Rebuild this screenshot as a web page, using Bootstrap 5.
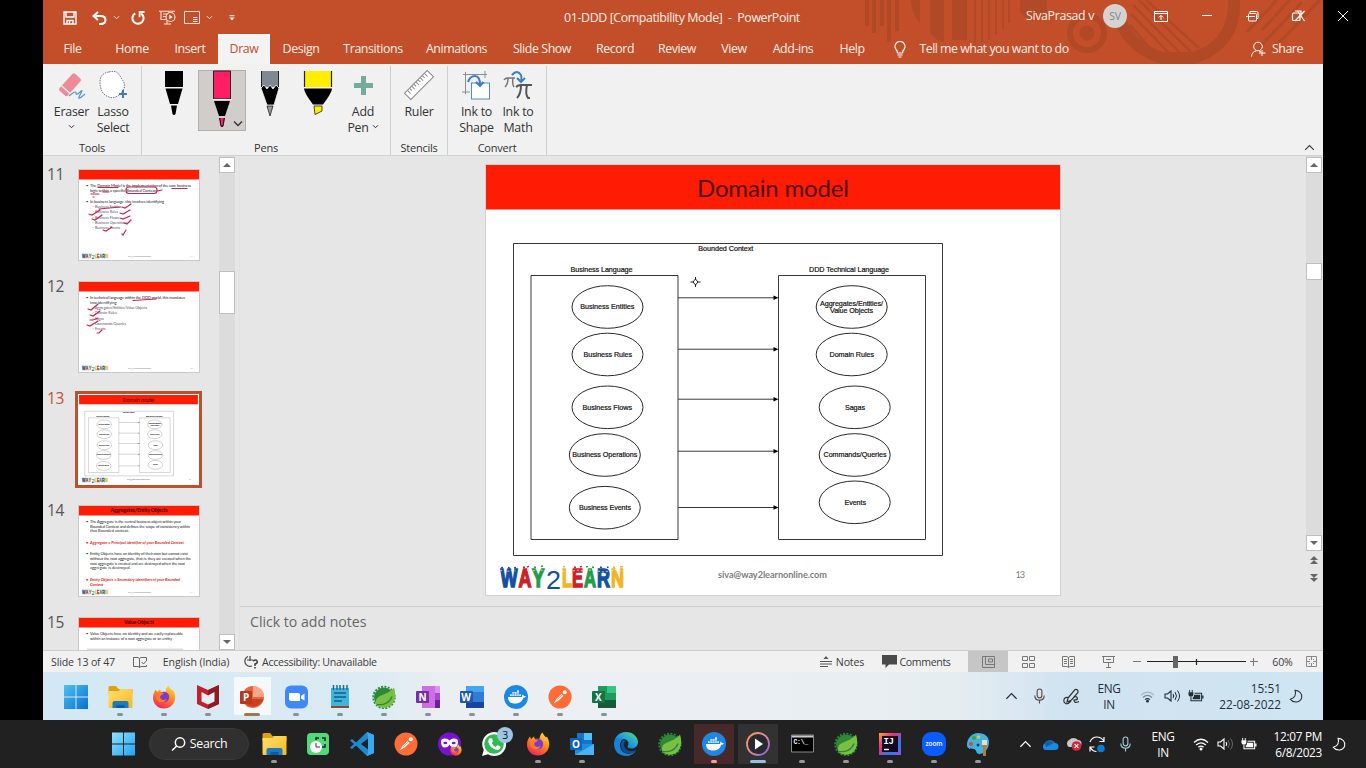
<!DOCTYPE html>
<html lang="en">
<head>
<meta charset="utf-8">
<meta name="viewport" content="width=device-width, initial-scale=1">
<title>01-DDD [Compatibility Mode] - PowerPoint</title>
<link href="https://cdn.jsdelivr.net/npm/bootstrap@5.3.0/dist/css/bootstrap.min.css" rel="stylesheet">
<script src="https://cdn.jsdelivr.net/npm/bootstrap@5.3.0/dist/js/bootstrap.bundle.min.js"></script>
<style>
body{width:1366px;height:768px;overflow:hidden;background:#000;font-family:"Open Sans","Noto Sans",sans-serif;font-size:12.4px;line-height:16px;color:#333}
svg{display:block;flex:none;overflow:visible}
.slots{display:grid;align-items:center;justify-items:center}
.desk{height:720px;padding-left:43px}
.remote{width:1280px;background:#e6e6e6}
.outer-close{width:40px;height:32px}
/* header */
.head{height:64px;background:#c24f29;color:#fdeee8}
.deco{left:0;top:0;overflow:hidden}
.titlebar{height:35px}
.qat{grid-template-columns:42px 16px 19px 23px 36px 13px 22px 24px;padding-left:6px;width:220px}
.doc-title{width:838px;letter-spacing:-.4px}
.winzone{height:32px}
.user{width:77px;letter-spacing:-.35px}
.avatar{width:24px;height:24px;background:#d5d3d2;color:#8a8582;font-size:10.5px;letter-spacing:-.2px;margin-right:11px}
.winbtns{grid-template-columns:46px 46px 45px 46px;margin-right:2px}
.tabs{height:30px;margin-top:-1px;grid-template-columns:59px 60px 56px 52px 62px 82px 85px 86px 60px 64px 50px 68px 50px 42px 150px 1fr;letter-spacing:-.42px}
.tabs .on{background:#f3f3f3;color:#c0512f;align-self:stretch;justify-self:stretch}
.bulb{margin-left:4px}
.tellme{letter-spacing:-.51px}
.share{padding-right:20px;letter-spacing:-.45px}
.share svg{margin-right:6px}
/* ribbon */
.ribbon{height:92px;background:#f1f1f1;border-bottom:1px solid #d2d2d2;letter-spacing:-.25px}
.grp{height:89px;margin-top:2px;border-right:1px solid #cfcfcf;padding-top:4px}
.grp .slots{align-items:start;height:71px}
.grp-name{font-size:11px;letter-spacing:-.25px;line-height:14px}
.tool{display:flex;flex-direction:column;align-items:center;text-align:center;white-space:nowrap}
.tool svg.big{margin-bottom:4px}
.pen-ico{margin-top:1px}
.g-tools{width:99px}.g-tools .slots{grid-template-columns:41px 42px;padding-left:8px}
.g-pens{width:249px}.g-pens .slots{grid-template-columns:49px 48px 48px 48px 42px;padding-left:7px}
.g-sten{width:57px}.g-conv{width:99px}.g-conv .slots{grid-template-columns:41px 42px;padding-left:8px}
.pen-on{width:48px;height:61px;background:#d0cdcb;border:1px solid #b1aeac}
/* work area */
.work{height:494px}
.thumbs{width:176px;height:494px;overflow:hidden;padding-top:13px}
.thumb-row{height:112px}
.num{width:35px;padding-left:4px;font-size:15.500px;letter-spacing:-.4px;line-height:10px;color:#555}
.num.sel{color:#c0512f}
.mini{width:122px;height:92px;border:1px solid #c9c9c9;background:#fff}
.mini.sel{width:127px;height:97px;border:3px solid #b9532f;padding:1px;margin:-2px 0 0 -3px}
.sbar{width:16px;background:#dcdcdc;padding-top:1px}
.sbtn,.sthumb{background:#fff;border:1px solid #bfbfbf;width:16px}
.sbtn{height:16px}
.tri{fill:#666}
.gap-l{height:98px}.th-l{height:43px}.gap-r{height:90px}.th-r{height:17px}
.canvas{height:450px;padding:9px 0 0 246px}
.center-row{border-bottom:1px solid #cfcfcf;margin-right:1px}
.slide-box{width:574px;height:430px;outline:1px solid #d2d2d2;background:#fff}
.notes{height:43px;padding:7px 0 0 10px;font-size:14.100px;letter-spacing:0;color:#666}
.rightbar{height:395px}
/* status */
.status{height:22px;background:#f1f1f1;border-top:1px solid #cdcdcd;font-size:10.600px;letter-spacing:-.15px;color:#3c3c3c}
.st-l{grid-template-columns:78px 35px 78px 5px 22px 117px;padding-left:1px}
.st-l .acc{letter-spacing:-.29px;justify-self:start}
.st-r{grid-template-columns:20px 28px 17px 16px 56px 15px 40px 40px 40px 40px 18px 100px 16px 37px 24px}
.st-r .cm{letter-spacing:-.35px}
.st-r .act{background:#c6c6c6;align-self:stretch;justify-self:stretch}
/* taskbars */
.tb1{height:48px;background:linear-gradient(90deg,#d3e8f4 0,#dcebf4 26%,#eceff2 32%,#eceff3 48%,#e6edf1 71%,#d0e3f1 80%,#cfe5f1 100%);color:#222f38;font-size:11.800px;letter-spacing:-.3px}
.apps{display:grid;grid-auto-flow:column;grid-auto-columns:44px}
.app{height:48px;padding-top:13px;display:flex;flex-direction:column;align-items:center;position:relative}
.app::after{content:"";width:6px;height:3px;border-radius:2px;background:#84919b;margin-top:4px}
.app.idle::after{background:none}
.app.act::after{width:16px;background:#a1764a}
.app.act{background:linear-gradient(#f4f9fc,#f4f9fc) center/37px 38px no-repeat}
.tb1 .apps{padding-left:11px}
.tr1{grid-template-columns:16px 40px 24px 52px 24px 25px 24px 73px 30px;margin-left:auto;margin-right:12px}
.tr1 .clock{letter-spacing:.02px}
.tb2{height:48px;background:#212121;color:#fff;font-size:11.800px;letter-spacing:-.3px}
.winkey{margin:0 10px 0 112px}
.tb2 .app::after{background:#999}
.tb2 .app{padding-top:12px}
.tb2 .app.idle::after{background:none}
.tb2 .app.alert-on{background:linear-gradient(#482929,#482929) center/40px 40px no-repeat}
.tb2 .app.alert-on::after{background:#ff9b9b}
.tb2 .app.now{background:linear-gradient(#323232,#323232) center/40px 40px no-repeat}
.tb2 .app.now::after{background:#91c1e4;width:16px}
.pill{width:100px;height:32px;background:#303030;border:1px solid #383838;border-radius:16px;font-size:12.400px;margin:0 3px 0 4px}
.cnt{left:25px;top:7px;width:16px;height:16px;background:#9cc6e6;color:#111;font-size:10.500px;position:absolute;border-radius:50%;text-align:center;line-height:16px}
.tr2{grid-template-columns:16px 32px 16px 32px 24px 52px 24px 24px 24px 61px 34px;margin-left:auto;margin-right:10px}
.clock{justify-self:end;text-align:right;line-height:16px}
.lang{text-align:center;line-height:16px}
</style>
</head>
<body>
<svg width="0" height="0" class="position-absolute" aria-hidden="true">
 <defs>
  <linearGradient id="gw" x1="0" y1="0" x2="1" y2="1"><stop offset="0" stop-color="#4cc2f1"/><stop offset="1" stop-color="#0a6fd0"/></linearGradient>
  <linearGradient id="gw2" x1="0" y1="0" x2="1" y2="1"><stop offset="0" stop-color="#8be2ff"/><stop offset="1" stop-color="#22a2f2"/></linearGradient>
  <linearGradient id="gf" x1="0" y1="0" x2="1" y2="1"><stop offset="0" stop-color="#ffe072"/><stop offset="1" stop-color="#f5b91c"/></linearGradient>
  <linearGradient id="gff" x1=".8" y1="0" x2=".3" y2="1"><stop offset="0" stop-color="#ffe03c"/><stop offset=".45" stop-color="#ff8a1e"/><stop offset="1" stop-color="#f0245a"/></linearGradient>
  <linearGradient id="ge" x1="0" y1="1" x2="1" y2="0"><stop offset="0" stop-color="#0c59a4"/><stop offset=".5" stop-color="#1b9de2"/><stop offset="1" stop-color="#5fe06a"/></linearGradient>
  <linearGradient id="gm" x1="0" y1="0" x2="1" y2="1"><stop offset="0" stop-color="#ff9a4a"/><stop offset=".5" stop-color="#e08a9a"/><stop offset="1" stop-color="#8060e0"/></linearGradient>
  <linearGradient id="gi" x1="0" y1="0" x2="1" y2="1"><stop offset="0" stop-color="#ffa13a"/><stop offset=".35" stop-color="#e8307a"/><stop offset=".7" stop-color="#2a7af0"/><stop offset="1" stop-color="#9a4af0"/></linearGradient>
  <symbol id="folder" viewBox="0 0 24 24"><path d="M0 2.500Q0 1 1.500 1h6l2.500 3H24v5H0z" fill="#e0a010"/><path d="M0 6h10l2-2h11q1 0 1 1v17q0 1-1 1H1q-1 0-1-1z" fill="url(#gf)"/><path d="M4 23v-5q0-2 2-2h12q2 0 2 2v5z" fill="#1a79c4"/><path d="M8 20h8v3H8z" fill="#0e5a9a"/></symbol>
  <symbol id="firefox" viewBox="0 0 24 24"><path d="M12 23.500C5.500 23.500 1 18.700 1 12.500 1 9 2.300 6.500 4 4.500l1 2.500 3-2.500 1 2.500c2-.5 3.500-.5 4.500 0 .2-2.500 1-5 3-6.500.5 2 2 3 3.500 5l1-.8c1.500 2.500 2.200 5 2.200 7.500 0 6.500-5 11.300-11.200 11.300z" fill="url(#gff)"/><circle cx="12" cy="12" r="5.200" fill="#7c3bd0"/><path d="M4.500 8c3 1 5-1 7.500 0-1 2-3.500 2-4 4 .5 3 4 3.800 6.500 2-1 4.500-9 4.500-10.500-1z" fill="#ff7a2a"/></symbol>
  <symbol id="spring" viewBox="0 0 24 24"><circle cx="12" cy="12.500" r="10" fill="#2c8a34"/><circle cx="12" cy="12.500" r="10.800" fill="none" stroke="#2c8a34" stroke-width="1.800" stroke-dasharray="2 1.400"/><path d="M22 2.500c2.500 8 1 15-4 18.500-4.500 2.500-9.500 2-13-.5 0-1-1.500-2-1-4.500C5 9 16 10.500 22 2.500z" fill="#78c043"/><path d="M5 19.500c7 1 13-2 15-8" fill="none" stroke="#2c8a34" stroke-width="1.300"/></symbol>
  <symbol id="postman" viewBox="0 0 24 24"><circle cx="12" cy="12" r="11.500" fill="#ff6c37"/><path d="M5.500 18.500l3-4.500 5-5 2 2-5 4.500z" fill="#fff"/><circle cx="16.800" cy="7.200" r="2" fill="#fff"/><path d="M9 15l5-5" stroke="#ff9a75" stroke-width=".8"/></symbol>
  <symbol id="docker" viewBox="0 0 24 24"><circle cx="12" cy="12" r="12" fill="#1d87e6"/><path d="M4 12h14c.3-1 0-2 .8-2.600.6.4 1 1 1 1.600.8-.2 1.500 0 2 .3-.5 1-1.400 1.500-2.600 1.500C18 17 15 18.500 11 18.500c-4.500 0-7-2-7-6.500z" fill="#fff"/><path d="M6 11V9h2V7h5V5.200h2V9h2v2z" fill="#fff" opacity=".85"/><path d="M8 7v4M10.300 7v4M12.800 7v4M15 7v4M6 9h11" stroke="#1d87e6" stroke-width=".5"/></symbol>
  <symbol id="win" viewBox="0 0 24 24"><path d="M0 0h11.500v11.500H0zM12.500 0H24v11.500H12.500zM0 12.500h11.500V24H0zM12.500 12.500H24V24H12.500z"/></symbol>
  <symbol id="wifi" viewBox="0 0 16 16"><g fill="none" stroke="currentColor" stroke-width="1.300"><path d="M1 6.500q7-6.500 14 0"/><path d="M3.200 9q4.800-4.300 9.600 0"/><path d="M5.400 11.300q2.600-2.200 5.200 0"/></g><circle cx="8" cy="13" r="1.500" fill="currentColor"/></symbol>
  <symbol id="wifilow" viewBox="0 0 16 16"><g fill="none" stroke="currentColor" stroke-width="1.300"><path d="M1 6.500q7-6.500 14 0" opacity=".25"/><path d="M3.200 9q4.800-4.300 9.600 0" opacity=".5"/><path d="M5.400 11.300q2.600-2.200 5.200 0"/></g><circle cx="8" cy="13" r="1.500" fill="currentColor"/></symbol>
  <symbol id="vol" viewBox="0 0 16 16"><path d="M1 6h2.500L7 3v10L3.500 10H1z" fill="none" stroke="currentColor" stroke-width="1.100"/><path d="M9 6q1.500 2 0 4" fill="none" stroke="currentColor" stroke-width="1.100"/></symbol>
  <symbol id="bat" viewBox="0 0 16 16"><path d="M1.200 1v3M4 1v3" stroke="currentColor"/><path d="M0 3.500h5.200V6q0 2-2.600 2T0 6z" fill="currentColor"/><path d="M2.600 8v4.500H14v-8H6.500" fill="none" stroke="currentColor" stroke-width="1.100"/><path d="M6 6h6.500v5H4.500V9Q6 8.500 6 6z" fill="currentColor"/><path d="M14.500 7H16v3h-1.500z" fill="currentColor"/></symbol>
  <symbol id="moon" viewBox="0 0 16 16"><path d="M6.500 1.500C8 6 6 9.500 1.500 11 5 15.500 12 14.500 13.500 9.500 14.500 5.500 11.500 1.500 6.500 1.500z" fill="none" stroke="currentColor" stroke-width="1.200"/></symbol>
  <symbol id="micr" viewBox="0 0 16 16"><rect x="5.500" y=".5" width="5" height="9.500" rx="2.500" fill="none" stroke="currentColor" stroke-width="1.200"/><path d="M3 7.500q0 5 5 5t5-5M8 12.500V16" fill="none" stroke="currentColor" stroke-width="1.200"/></symbol>
  <symbol id="up" viewBox="0 0 14 8"><path d="M1.500 7L7 1.500 12.500 7" fill="none" stroke="currentColor" stroke-width="1.300"/></symbol>
  <symbol id="dn" viewBox="0 0 8 6"><path d="M1 1.500l3 3 3-3" fill="none" stroke="currentColor" stroke-width="1.200"/></symbol>
  <g id="w2l" font-family="Liberation Sans" font-weight="700" font-size="25" stroke-width="1.500">
   <text x="500.500" y="587" fill="#1450a0" stroke="#1450a0" textLength="17" lengthAdjust="spacingAndGlyphs">W</text><text x="518.500" y="587" fill="#cf2027" stroke="#cf2027" textLength="13" lengthAdjust="spacingAndGlyphs">A</text><text x="532" y="586.500" fill="#1f9d49" stroke="#1f9d49" textLength="12.500" lengthAdjust="spacingAndGlyphs">Y</text><text x="546" y="589" fill="#1450a0" stroke="none" font-weight="400" font-size="26" textLength="15" lengthAdjust="spacingAndGlyphs">2</text><text x="562" y="587" fill="#f5b324" stroke="#f5b324" textLength="10" lengthAdjust="spacingAndGlyphs">L</text><text x="572" y="587" fill="#cf2027" stroke="#cf2027" textLength="11" lengthAdjust="spacingAndGlyphs">E</text><text x="584" y="587" fill="#1f9d49" stroke="#1f9d49" textLength="12" lengthAdjust="spacingAndGlyphs">A</text><text x="597" y="587" fill="#1450a0" stroke="#1450a0" textLength="13" lengthAdjust="spacingAndGlyphs">R</text><text x="611" y="587" fill="#f5b324" stroke="#f5b324" textLength="13" lengthAdjust="spacingAndGlyphs">N</text>
   <path d="M500 571l4-1 3 1.500 5-1 4 .5M519 572l3-1M527 570l5 2M533 571l4-1.500 7 1M562 571l9 1M573 571l4-1 6 1M585 571l9-1.500M598 571l5 1 6-1M611 571l4-1.500 8 1.500" stroke="#fff" stroke-width=".7" fill="none" stroke-dasharray="2 2"/>
   <path d="M501 568l2-.6M508 567.500l2 .6M514 568l2-.6M600 567l2 .6M607 567.500l1.500-.5" stroke="#1450a0"/><path d="M523 567l2 .5M527 567l2-.6M574 567l2 .5M580 567l2-.6" stroke="#cf2027"/><path d="M534 567l2 .5M541 566.500l2-.6M586 567l2-.6M592 567l2 .5" stroke="#1f9d49"/><path d="M563 567l2-.6M613 567l2 .5M620 567l3-.6" stroke="#f5b324"/>
  </g>
  <g id="mini-foot"><g transform="translate(-101.500 -34.500) scale(.209)"><use href="#w2l"/></g><text x="49" y="87" font-size="2.300" fill="#888" textLength="23">siva@way2learnonline.com</text></g>
 </defs>
</svg>

<div class="desk d-flex">
 <div class="remote d-flex flex-column">
  <header class="head position-relative">
   <svg class="deco position-absolute" width="1280" height="64" viewBox="43 0 1280 64" aria-hidden="true">
    <g fill="#a94726" opacity=".65"><path d="M865 0h4v26h-4zM872 0h4v33h-4zM880 0h4v26h-4zM887 0h4v42h-4zM895 0h4v31h-4zM911 0h9v23q-8-8-9-23zM930 0h14v42q-9-2-14-9zM952 0h15v40h-15z"/>
    <path d="M974 0h2v43h-2zM981 0h2v42h-2zM988 0h2v40h-2zM995 0h2v35h-2zM1002 0h2v29h-2zM1008 0h2v23h-2zM1020 0h27v14q-14 14-27-2z"/></g>
    <g fill="none" stroke="#a94726" opacity=".65"><circle cx="1087" cy="33" r="17" stroke-width="6"/><circle cx="1087" cy="33" r="4" stroke-width="7"/><path d="M1118 12q7 34 44 46h32q42-14 40-58" stroke-width="12"/>
    <path d="M1139 0l52 52M1133 5l48 49M1131 14l40 41M1146 0l53 48M1130 25l24 28" stroke-width="2.500"/><path d="M1277 0l-30 32M1290 0l-28 30M1302 2l-42 45M1320 0l-48 50" stroke-width="3"/></g>
   </svg>
   <div class="titlebar d-flex align-items-center position-relative">
    <div class="qat slots">
     <svg width="14" height="14" viewBox="0 0 14 14" fill="none" stroke="#fff" stroke-width="1.400"><path d="M1 1h12v12H1zM3 1v5h8V1M4 13V9.500h6V13M6.500 10v3"/></svg>
     <svg width="15" height="14" viewBox="0 0 15 14" fill="none" stroke="#fff" stroke-width="2"><path d="M6 1L1.500 5 6 9M2 5h6.500q5 0 5 4t-5 4H7"/></svg>
     <svg width="7" height="5"><use href="#dn"/></svg>
     <svg width="14" height="14" viewBox="0 0 14 14" fill="none" stroke="#fff" stroke-width="2"><path d="M4.300 2.300A5.600 5.600 0 1 0 10.200 2.600"/><path d="M13.500 1H8.600v5.200" stroke-width="1.800"/></svg>
     <svg width="17" height="15" viewBox="0 0 17 15" fill="none" stroke="#fbe3d9" stroke-width="1.100"><path d="M0 1.200h16M2 1v8.500h5M4 4h4M4 6.500h3M8 10v4M5 14h7"/><circle cx="11.500" cy="7" r="4.500"/><path d="M10.300 4.800v4.400l3.400-2.200z" fill="#fff" stroke="none"/></svg>
     <svg width="16" height="13" viewBox="0 0 16 13" fill="none" stroke="#fbe3d9"><path d="M.5.500h15v12H.5zM9 6.500h4.500M9 8.500h4.500M9 10.500h4.500"/></svg>
     <svg width="7" height="5"><use href="#dn"/></svg>
     <svg width="6" height="6" viewBox="0 0 6 6"><path d="M.5.700h5" stroke="#fff"/><path d="M.5 2.500h5L3 5.500z" fill="#fff"/></svg>
    </div>
    <div class="doc-title text-center">01-DDD [Compatibility Mode]&nbsp; -&nbsp; PowerPoint</div>
   </div>
   <div class="winzone position-absolute top-0 end-0 d-flex align-items-center">
    <span class="user text-nowrap">SivaPrasad v</span>
    <span class="avatar rounded-circle d-flex align-items-center justify-content-center">SV</span>
    <div class="winbtns slots">
     <svg width="14" height="11" viewBox="0 0 14 11" fill="none" stroke="#fff"><path d="M.5.500h13v10H.5zM.5 2.500h13M7 9V4.500M4.800 6.500L7 4.300l2.200 2.200"/></svg>
     <svg width="10" height="2"><path d="M0 .5h10" stroke="#fff"/></svg>
     <svg width="13" height="12" viewBox="0 0 13 12" fill="none" stroke="#fff"><rect x="2.500" y="3.500" width="8" height="7.500" rx="1"/><path d="M4 3V1.500h6.500q1.500 0 1.500 1.500v5.500h-1.500M0 6.500h9"/></svg>
     <svg width="13" height="12" viewBox="0 0 13 12" fill="none" stroke="#fff" stroke-width="1.200"><rect x=".5" y="3" width="7.500" height="7.500" rx="1"/><path d="M3 1h6v6M3 11L12.500 1M5.500 1l7 10"/></svg>
    </div>
   </div>
   <nav class="tabs slots position-relative">
    <span>File</span><span>Home</span><span>Insert</span><span class="on d-flex align-items-center justify-content-center">Draw</span><span>Design</span><span>Transitions</span><span>Animations</span><span>Slide Show</span><span>Record</span><span>Review</span><span>View</span><span>Add-ins</span><span>Help</span>
    <svg class="bulb" width="12" height="17" viewBox="0 0 12 17" fill="none" stroke="#fff" stroke-width="1.200"><path d="M3.500 12q0-2-1.500-3.500A5 5 0 1 1 10 8.500Q8.500 10 8.500 12zM3.500 14h5M4.500 16h3"/></svg>
    <span class="tellme text-nowrap">Tell me what you want to do</span>
    <span class="share d-flex align-items-center ms-auto"><svg width="15" height="16" viewBox="0 0 15 16" fill="none" stroke="#fff"><circle cx="7" cy="5.500" r="4.300"/><path d="M.5 15.500q.5-5 5-5.700M11 9v6M8 12h6.500M8 10l2 1"/></svg>Share</span>
   </nav>
  </header>

  <section class="ribbon d-flex">
   <div class="grp g-tools">
    <div class="slots">
     <div class="tool"><svg class="big" width="30" height="30" viewBox="0 0 30 30"><g transform="rotate(-48 14 14)"><rect x="2" y="9" width="23" height="11" rx="2" fill="#ef8b98"/><path d="M7 9v11" stroke="#fff" stroke-width="1.200"/></g><path d="M13 26q7-6 7-3t4-1 0 3 5-1" fill="none" stroke="#5b94c6" stroke-width="1.200"/></svg>Eraser<svg class="mt-1" width="7" height="5"><use href="#dn"/></svg></div>
     <div class="tool"><svg class="big" width="28" height="30" viewBox="0 0 28 30"><path d="M10 2c7-2 10 1 12 6 4 5 5 8 2 12-3 6-9 9-14 7C3 25 1 18 1 12 1 6 4 3 10 2z" fill="#fff" stroke="#777" stroke-dasharray="1.500 1"/><path d="M24 20v8M20 24h8" stroke="#3f7fb5" stroke-width="2"/></svg>Lasso<br>Select</div>
    </div>
    <div class="grp-name text-center">Tools</div>
   </div>
   <div class="grp g-pens">
    <div class="slots">
     <svg class="pen-ico" width="20" height="46" viewBox="0 0 20 46"><path d="M1 0h18v16H1zM1.500 17.500h17L14 33H6zM7 34.500h6l-1.500 8.500q-1.500 2-3 0z"/></svg>
     <div class="pen-on d-flex justify-content-center"><svg width="48" height="58" viewBox="0 0 48 58"><path d="M15.500 0h17v28h-17z" fill="#ff1f66" stroke="#222"/><path d="M14.500 28.500h19" stroke="#fff"/><path d="M16 30h16l-5 15h-6zM21 47h6l-1.500 8q-1.500 2-3 0z"/><path d="M22.200 47h3.600l-1 7.500h-1.600z" fill="#ff1f66"/><path d="M36 50.500l4 4 4-4" fill="none" stroke="#333" stroke-width="1.300"/></svg></div>
     <svg class="pen-ico" width="20" height="46" viewBox="0 0 20 46"><path d="M1 0h18v16H1z" fill="#7f8a90"/><path d="M1.500 0v16M18.500 0v16" stroke="#222"/><path d="M1 17l3-3 3 4 3-4 3 4 3-4 3 3-5 17H7z" fill="#000" stroke="#f1f1f1" stroke-width=".8"/><path d="M7 35h6l-3 10z" fill="#999" stroke="#222" stroke-width=".8"/></svg>
     <svg class="pen-ico" width="30" height="46" viewBox="0 0 30 46"><path d="M1 0h28v16H1z" fill="#ffee00"/><path d="M1.500 0v16M28.500 0v16" stroke="#222" stroke-width="1.200"/><path d="M1 17.500h28q0 4-9 16H10Q1 21.500 1 17.500z"/><path d="M11 35h8v5l-7 3.500z" fill="#ffee00" stroke="#222" stroke-width=".8"/></svg>
     <div class="tool"><svg class="big" width="28" height="30" viewBox="0 0 28 30"><path d="M14.500 6v19M5 15.500h19" stroke="#76aa9b" stroke-width="5"/></svg>Add<br><span>Pen <svg class="d-inline mb-1" width="7" height="5"><use href="#dn"/></svg></span></div>
    </div>
    <div class="grp-name text-center">Pens</div>
   </div>
   <div class="grp g-sten">
    <div class="slots"><div class="tool"><svg class="big" width="30" height="30" viewBox="0 0 30 30"><g transform="rotate(-45 15 15)" fill="#fff" stroke="#888"><rect x="-1" y="10.500" width="32" height="9"/><path d="M3 11v4M6 11v3M9 11v4M12 11v3M15 11v4M18 11v3M21 11v4M24 11v3M27 11v4"/></g></svg>Ruler</div></div>
    <div class="grp-name text-center">Stencils</div>
   </div>
   <div class="grp g-conv">
    <div class="slots">
     <div class="tool"><svg class="big" width="30" height="30" viewBox="0 0 30 30" fill="none" stroke="#8d8d8d"><path d="M4.500 2v22M2 4.500h24M24 1v7M1 22h8"/><rect x="10.500" y="13" width="18" height="16" fill="#fff" stroke="#4f8ecb"/><path d="M7 12q2-6 7-6t5 9M15 12l4 4 3.500-4" stroke="#3d7fc2" stroke-width="2"/></svg>Ink to<br>Shape</div>
     <div class="tool"><svg class="big" width="30" height="30" viewBox="0 0 30 30" fill="none" stroke="#777" stroke-width="1.500"><path d="M1 10q1-2 4-2h7M5 8q0 6-3 9M10 8q-1 6 1 9" /><path d="M13 17q2-2 5-2h11M18 15q0 9-4 13M24 15q-2 9 1 13h2" stroke="#555" stroke-width="2"/><path d="M9 5q5-6 9 0 1 2 0 6M14 8l4 4 4-4" stroke="#3d7fc2" stroke-width="2"/></svg>Ink to<br>Math</div>
    </div>
    <div class="grp-name text-center">Convert</div>
   </div>
   <svg class="ms-auto align-self-end mb-1 me-2" width="11" height="7"><use href="#up"/></svg>
  </section>

  <main class="work d-flex">
   <div class="thumbs">
    <div class="thumb-row d-flex"><span class="num">11</span><div class="mini">
     <svg width="120" height="90" viewBox="0 0 120 90" font-family="Lato" font-size="4" fill="#222"><path d="M0 0h120v9.500H0z" fill="#ff1c05"/>
      <text x="7" y="17">•</text><text x="11" y="17" textLength="101">The Domain Model is the implementation of the core business</text><text x="11" y="21.500" textLength="66">logic within a specific Bounded Context</text><text x="7" y="33">•</text><text x="11" y="33" textLength="74">In business language, this involves identifying</text>
      <g font-size="3.600" fill="#555"><text x="13" y="38">– Business Entities</text><text x="13" y="43.400">– Business Rules</text><text x="13" y="48.700">– Business Flows</text><text x="13" y="54">– Business Operations</text><text x="13" y="59.400">– Business Events</text></g>
      <g fill="none" stroke="#cc2450" stroke-width="1.200" stroke-linecap="round"><path d="M19 17.500h20M93 18.500h15M12 24h8M14 27l1 0M24 22h6M78 21l5-1M20 39l21-2M10 44l3 1 8-5M13 49l3 1 7-5M43 37l3 1 6-4M41 43l3 1 7-4M41 48l3 1 7-3M45 53l3 1 4-4M24 60l3 1 6-4M43 64l1 1 3-5"/><rect x="47" y="17" width="31" height="6.500" rx="3"/></g>
      <use href="#mini-foot"/><text x="111" y="87" font-size="2.300" fill="#888">11</text></svg></div></div>
    <div class="thumb-row d-flex"><span class="num">12</span><div class="mini">
     <svg width="120" height="90" viewBox="0 0 120 90" font-family="Lato" font-size="4" fill="#222"><path d="M0 0h120v9.500H0z" fill="#ff1c05"/>
      <text x="7" y="17">•</text><text x="11" y="17" textLength="95">In technical language within the DDD world, this translates</text><text x="11" y="21.500">into identifying</text>
      <g font-size="3.600" fill="#555"><text x="13" y="27" textLength="55">– Aggregates/Entities/Value Objects</text><text x="13" y="32.300">– Domain Rules</text><text x="13" y="37.600">– Sagas</text><text x="13" y="43" textLength="34">– Commands/Queries</text><text x="13" y="48.300">– Events</text></g>
      <g fill="none" stroke="#cc2450" stroke-width="1.200" stroke-linecap="round"><path d="M54 18.500l23-1.500M9 27l3 1 7-6M11 33l3 1 7-5M11 38l3 0 5-2M8 43l3 1 8-5M18 51l2 0 3-3"/></g>
      <use href="#mini-foot"/><text x="111" y="87" font-size="2.300" fill="#888">12</text></svg></div></div>
    <div class="thumb-row d-flex"><span class="num sel">13</span><div class="mini sel"><svg width="119" height="89" viewBox="486 165 574 430"><use href="#slide13"/></svg></div></div>
    <div class="thumb-row d-flex"><span class="num">14</span><div class="mini">
     <svg width="120" height="90" viewBox="0 0 120 90" font-family="Lato" font-size="4" fill="#222"><path d="M0 0h120v9.500H0z" fill="#ff1c05"/><text x="60" y="6.300" font-size="5.200" font-weight="700" text-anchor="middle" fill="#4a0a05" textLength="57">Aggregates/Entity Objects</text>
      <text x="7" y="17">•</text><text x="11" y="17" textLength="91">The Aggregate is the central business object within your</text><text x="11" y="21.500" textLength="100">Bounded Context and defines the scope of consistency within</text><text x="11" y="26">that Bounded context.</text>
      <g fill="#e8231a" font-style="italic" font-weight="700"><text x="7" y="37.600">•</text><text x="11" y="37.600" textLength="94">Aggregate = Principal identifier of your Bounded Context</text><text x="7" y="75">•</text><text x="11" y="75" textLength="90">Entity Objects = Secondary identifiers of your Bounded</text><text x="11" y="80">Context</text></g>
      <text x="7" y="49.300">•</text><text x="11" y="49.300" textLength="98">Entity Objects have an identity of their own but cannot exist</text><text x="11" y="54" textLength="101">without the root aggregate, that is, they are created when the</text><text x="11" y="58.700" textLength="95">root aggregate is created and are destroyed when the root</text><text x="11" y="63.400">aggregate is destroyed.</text>
      <use href="#mini-foot"/><text x="111" y="87" font-size="2.300" fill="#888">14</text></svg></div></div>
    <div class="thumb-row d-flex"><span class="num">15</span><div class="mini">
     <svg width="120" height="90" viewBox="0 0 120 90" font-family="Lato" font-size="4" fill="#222"><path d="M0 0h120v9.500H0z" fill="#ff1c05"/><text x="60" y="6.300" font-size="5.200" font-weight="700" text-anchor="middle" fill="#4a0a05" textLength="30">Value Objects</text>
      <text x="7" y="17">•</text><text x="11" y="17" textLength="93">Value Objects have no identity and are easily replaceable</text><text x="11" y="21.500" textLength="82">within an instance of a root aggregate or an entity</text><path d="M8 30.500h96v3H8z" fill="#ddd"/></svg></div></div>
   </div>
   <div class="sbar d-flex flex-column">
    <div class="sbtn d-flex align-items-center justify-content-center"><svg class="tri" width="8" height="4"><path d="M0 4h8L4 0z"/></svg></div>
    <div class="gap-l"></div><div class="sthumb th-l"></div>
    <div class="sbtn mt-auto d-flex align-items-center justify-content-center"><svg class="tri" width="8" height="4"><path d="M0 0h8L4 4z"/></svg></div>
   </div>
   <div class="border-start ms-1 flex-grow-1">
    <div class="center-row d-flex">
     <div class="canvas flex-grow-1">
      <div class="slide-box">
      <svg width="574" height="430" viewBox="486 165 574 430">
       <g id="slide13">
        <path d="M486 165h574v44.500H486z" fill="#ff1c05"/>
        <text x="697" y="196.500" font-family="Lato" font-size="24" fill="#4d0d06" textLength="152">Domain model</text>
        <g fill="none" stroke="#3a3a3a"><path d="M513.500 243.500h429v312h-429zM531 275.500h147v264H531zM778.500 275.500h147v264h-147z"/>
         <path d="M678 297.800h98M678 349.200h98M678 399.200h98M678 451.200h98M678 507.500h98"/>
         <g stroke="#2a2a2a"><ellipse cx="607.500" cy="307" rx="35.500" ry="21.300"/><ellipse cx="607.500" cy="354.500" rx="35.500" ry="21.300"/><ellipse cx="607.500" cy="407.300" rx="35.500" ry="21.300"/><ellipse cx="604.800" cy="455" rx="35.500" ry="21.300"/><ellipse cx="604.800" cy="507.700" rx="35.500" ry="21.300"/>
         <ellipse cx="851.700" cy="307" rx="35.500" ry="21.300"/><ellipse cx="851.700" cy="354.500" rx="35.500" ry="21.300"/><ellipse cx="854.700" cy="407.300" rx="35.500" ry="21.300"/><ellipse cx="854.700" cy="455" rx="35.500" ry="21.300"/><ellipse cx="854.700" cy="502.300" rx="35.500" ry="21.300"/></g></g>
        <path d="M773.500 295.500l5 2.300-5 2.300zM773.500 346.900l5 2.300-5 2.300zM773.500 396.900l5 2.300-5 2.300zM773.500 448.900l5 2.300-5 2.300zM773.500 505.200l5 2.300-5 2.300z"/>
        <g font-family="Liberation Sans" font-size="7.200" fill="#111" stroke="#111" stroke-width=".2">
         <text x="698.300" y="251" textLength="55">Bounded Context</text><text x="570.500" y="272.300" textLength="62">Business Language</text><text x="809" y="272.300" textLength="80">DDD Technical Language</text>
         <text x="580.300" y="309.300" textLength="54">Business Entities</text><text x="583.500" y="357" textLength="48.500">Business Rules</text><text x="582.500" y="409.800" textLength="49.500">Business Flows</text><text x="572.300" y="457.300" textLength="65">Business Operations</text><text x="579" y="510" textLength="52">Business Events</text>
         <text x="820" y="305.700" textLength="63">Aggregates/Entities/</text><text x="830" y="313.200" textLength="43">Value Objects</text><text x="829.500" y="357" textLength="44.500">Domain Rules</text><text x="845" y="409.800" textLength="20">Sagas</text><text x="823.500" y="457.300" textLength="63">Commands/Queries</text><text x="844.500" y="504.800" textLength="21.500">Events</text></g>
        <use href="#w2l"/>
        <g font-family="Lato" font-size="9.200" font-weight="700" fill="#7d7d7d"><text x="718" y="578" textLength="109">siva@way2learnonline.com</text><text x="1015.500" y="578" font-weight="400" textLength="9.500">13</text></g>
       </g>
       <path d="M695.500 277v2.800M695.500 284.200v2.800M690.500 282h2.800M697.700 282h2.800M693 282l2.500-3 2.500 3-2.500 3z" fill="none" stroke="#222"/>
      </svg>
      </div>
     </div>
     <div>
      <div class="sbar rightbar d-flex flex-column">
       <div class="sbtn d-flex align-items-center justify-content-center"><svg class="tri" width="8" height="4"><path d="M0 4h8L4 0z"/></svg></div>
       <div class="gap-r"></div><div class="sthumb th-r"></div>
       <div class="sbtn mt-auto d-flex align-items-center justify-content-center"><svg class="tri" width="8" height="4"><path d="M0 0h8L4 4z"/></svg></div>
      </div>
      <svg class="tri mx-auto mt-1" width="8" height="28" viewBox="0 0 8 28"><path d="M0 5h8L4 1zM0 9h8L4 5zM0 19h8l-4 4zM0 23h8l-4 4z"/></svg>
     </div>
    </div>
    <div class="notes">Click to add notes</div>
   </div>
  </main>

  <footer class="status d-flex justify-content-between">
   <div class="st-l slots text-nowrap">
    <span>Slide 13 of 47</span>
    <svg width="14" height="12" viewBox="0 0 14 12" fill="none" stroke="#666"><path d="M6.500 11.500L5 10.500H.5v-9H5l1.500 1zM6.500 2.500L8 1.500h5.500V4M6.500 11.500L8 10.500h5.500V9M8.500 6l2 2 3.500-4"/></svg>
    <span>English (India)</span><span></span>
    <svg width="14" height="14" viewBox="0 0 14 14" fill="none" stroke="#444" stroke-width="1.200"><path d="M4 1.500A5 5 0 1 0 8 11M6 1v5M3 5h6"/><path d="M9 6q3-2 4 0t-2 3v2M11 12v1.500" stroke-width="1.600"/></svg>
    <span class="acc">Accessibility: Unavailable</span>
   </div>
   <div class="st-r slots text-nowrap">
    <svg width="12" height="11" viewBox="0 0 12 11" stroke="#555" fill="none"><path d="M0 5.500h12M0 8h12M0 10.500h8"/><path d="M3.500 3L6 0l2.500 3z" fill="#555" stroke="none"/></svg>
    <span>Notes</span><span></span>
    <svg width="15" height="13" viewBox="0 0 15 13"><path d="M0 0h15v9.500H7L3.500 13V9.500H0z" fill="#4a4a4a"/></svg>
    <span class="cm">Comments</span><span></span>
    <span class="act d-flex align-items-center justify-content-center"><svg width="13" height="12" viewBox="0 0 13 12" fill="none" stroke="#777"><path d="M.5.500h12v11H.5zM3.500.500v8M3.500 8.500h9M6.500 3h4v3h-4z"/></svg></span>
    <svg width="13" height="12" viewBox="0 0 13 12" fill="none" stroke="#777"><path d="M.5.500h5v4h-5zM7.500.500h5v4h-5zM.5 7.500h5v4h-5zM7.500 7.500h5v4h-5z"/></svg>
    <svg width="13" height="12" viewBox="0 0 13 12" fill="none" stroke="#777"><path d="M6.500 11.500L5 10.500H.5V.5H5l1.500 1L8 .5h4.500v10H8zM6.500 1v10M2 3.500h3M2 5.500h3M2 7.500h3M8 3.500h3M8 5.500h3M8 7.500h3"/></svg>
    <svg width="13" height="12" viewBox="0 0 13 12" fill="none" stroke="#777"><path d="M0 .5h13M1.500.500v6h10v-6M6.500 7v4M4 11.500h5M4 3.500h5"/></svg>
    <svg width="8" height="2"><path d="M0 .5h8" stroke="#777"/></svg>
    <svg width="99" height="12" viewBox="0 0 99 12"><path d="M0 5.500h99" stroke="#222"/><path d="M49.500 3v6" stroke="#222" stroke-width="1.200"/><path d="M26 0h5v12h-5z" fill="#666"/></svg>
    <svg width="8" height="8"><path d="M0 3.500h8M3.500 0v8" stroke="#777"/></svg>
    <span class="ps-1">60%</span>
    <svg width="11" height="11" viewBox="0 0 11 11" fill="none" stroke="#888"><path d="M.5.500h10v10H.5zM5.500 0v4M5.500 7v4M0 5.500h4M7 5.500h4M3 3l1 1M8 3L7 4M3 8l1-1M8 8L7 7"/></svg>
   </div>
  </footer>

  <div class="tb1 d-flex align-items-center">
   <div class="apps">
    <div class="app idle"><svg width="24" height="24" fill="url(#gw)"><use href="#win"/></svg></div>
    <div class="app"><svg width="25" height="24"><use href="#folder"/></svg></div>
    <div class="app"><svg width="24" height="24"><use href="#firefox"/></svg></div>
    <div class="app"><svg width="24" height="24" viewBox="0 0 24 24"><path d="M1 0l11 5L23 0v19l-11 5-11-5z" fill="#c4202b"/><path d="M12 5l11-5v19l-11 5v-5l6-2.500V8l-6 2.500z" fill="#8f1a20"/><path d="M5.500 7l6.500 3.500L18.500 7v9.500L12 19.500l-6.500-3z" fill="#e9eef3"/></svg></div>
    <div class="app act"><svg width="24" height="24" viewBox="0 0 24 24"><circle cx="13" cy="12" r="11" fill="#e8653f"/><path d="M13 1a11 11 0 0 1 11 11H13z" fill="#ffa587"/><path d="M2.500 14a11 11 0 0 0 21 0z" fill="#c9401f"/><rect y="6" width="12" height="13" rx="1" fill="#b9371a"/><text x="3" y="16" font-size="10" font-weight="700" fill="#fff">P</text></svg></div>
    <div class="app"><svg width="23" height="24" viewBox="0 0 23 24"><rect y=".5" width="23" height="23" rx="6" fill="#4089f5"/><path d="M4 8h9q2 0 2 2v6H6q-2 0-2-2zM16 11l3.500-2.500v7L16 13.500z" fill="#fff"/></svg></div>
    <div class="app"><svg width="20" height="24" viewBox="0 0 20 24"><path d="M1 3h18v18H1z" fill="#3fb4dd"/><path d="M1 21h18v2H1z" fill="#8a4b2a"/><path d="M4 8h12M4 12h12M4 16h8" stroke="#0f5f86" stroke-width="1.500"/><path d="M3.500 0v5M7 0v5M10 0v5M13.500 0v5M17 0v5" stroke="#1d6d92" stroke-width="1.500"/></svg></div>
    <div class="app"><svg width="24" height="24"><use href="#spring"/></svg></div>
    <div class="app"><svg width="24" height="24" viewBox="0 0 24 24"><path d="M6 1h18v22H6z" fill="#cb6fe4"/><path d="M19 1h5v7h-5z" fill="#dc90f0"/><path d="M19 8h5v7h-5z" fill="#a84ccc"/><path d="M19 15h5v8h-5z" fill="#6c2290"/><rect y="6" width="13" height="12" rx="1" fill="#7a2da3"/><text x="2.500" y="15.500" font-size="10" font-weight="700" fill="#fff">N</text></svg></div>
    <div class="app"><svg width="24" height="24" viewBox="0 0 24 24"><path d="M6 1h18v22H6z" fill="#2f7cd8"/><path d="M6 1h18v6H6z" fill="#42a5ee"/><path d="M6 17h18v6H6z" fill="#16479c"/><rect y="6" width="13" height="12" rx="1" fill="#1c58b4"/><text x="1.300" y="15.500" font-size="10" font-weight="700" fill="#fff">W</text></svg></div>
    <div class="app"><svg width="24" height="24"><use href="#docker"/></svg></div>
    <div class="app"><svg width="24" height="24"><use href="#postman"/></svg></div>
    <div class="app"><svg width="24" height="24" viewBox="0 0 24 24"><path d="M6 1h18v22H6z" fill="#1f9a5d"/><path d="M15 1h9v7h-9z" fill="#35c684"/><path d="M6 15h18v8H6z" fill="#165a38"/><rect y="6" width="13" height="12" rx="1" fill="#147542"/><text x="3" y="15.500" font-size="10" font-weight="700" fill="#fff">X</text></svg></div>
   </div>
   <div class="tr1 slots">
    <svg width="13" height="8"><use href="#up"/></svg><svg width="15" height="16" color="#5c4a3c"><use href="#micr"/></svg>
    <svg width="17" height="17" viewBox="0 0 17 17" fill="none" stroke="#333" stroke-width="1.200"><path d="M5 10l7-8.500q3.500-.5 3 3L8.500 12l-4.500 2zM5 9.500Q0 9 1 14q2.500 4 7-1M10.500 9.500q4-2 4 1.500-1 1-3.500 1 0 4 5 1.500"/></svg>
    <span class="lang">ENG<br>IN</span><svg width="15" height="15"><use href="#wifilow"/></svg>
    <svg width="16" height="16" viewBox="0 0 16 16"><use href="#vol" width="16" height="16"/><path d="M11 4q3 4 0 8M13.500 2.500q4 5.500 0 11" fill="none" stroke="currentColor"/></svg><svg width="16" height="15"><use href="#bat"/></svg>
    <span class="clock">15:51<br>22-08-2022</span><svg width="15" height="15"><use href="#moon"/></svg>
   </div>
  </div>
 </div>
 <div class="outer-close d-flex align-items-center justify-content-center"><svg width="10" height="10"><path d="M0 0l10 10M10 0L0 10" stroke="#fff"/></svg></div>
</div>

<div class="tb2 d-flex align-items-center">
 <svg class="winkey" width="23" height="24" fill="url(#gw2)"><use href="#win"/></svg>
 <div class="pill d-flex align-items-center justify-content-center gap-1"><svg width="15" height="14" viewBox="0 0 15 14" fill="none" stroke="#fff" stroke-width="1.500"><circle cx="9" cy="5.500" r="4.700"/><path d="M5.700 9L1 13.500"/></svg>Search</div>
 <div class="apps">
  <div class="app"><svg width="25" height="24"><use href="#folder"/></svg></div>
  <div class="app idle"><svg width="22" height="24" viewBox="0 0 22 24"><rect y="1" width="22" height="22" rx="4" fill="#51d977"/><path d="M9 8V6h3M15 6h3v3M18 12v3h-3" stroke="#123" stroke-width="1.500" fill="none"/><circle cx="9" cy="15" r="6" fill="#fff"/><path d="M9 11v4h4" stroke="#333" fill="none"/></svg></div>
  <div class="app idle"><svg width="24" height="24" viewBox="0 0 24 24"><path d="M17 0l7 3v18l-7 3L6 13.500 2 17l-2-1.500L4 12 0 8.500 2 7l4 3.500zM18 6.500L11 12l7 5.500z" fill="#1f8ad2"/><path d="M17 0l7 3v18l-7 3 1-4V5z" fill="#3ba9f0"/></svg></div>
  <div class="app idle"><svg width="24" height="24"><use href="#postman"/></svg></div>
  <div class="app idle"><svg width="24" height="24" viewBox="0 0 24 24"><circle cx="11.500" cy="12" r="11.500" fill="#7a12cf"/><path d="M3 9.500q0-3 4-3 3 0 4.500 2 1.500-2 4.500-2 4 0 4 3 0 6-4 6-3 0-4.500-3-1.500 3-4.500 3-4 0-4-6z" fill="#fff"/><ellipse cx="7.300" cy="11" rx="2" ry="1.300" fill="#7a12cf"/><ellipse cx="15.700" cy="11" rx="2" ry="1.300" fill="#7a12cf"/><use href="#firefox" x="12" y="12" width="12" height="12"/></svg></div>
  <div class="app idle"><svg width="24" height="24" viewBox="0 0 24 24"><path d="M0 24l1.800-6A12 12 0 1 1 6 22.300z" fill="#fff"/><circle cx="12" cy="12" r="9.800" fill="#33b954"/><path d="M8 6l2 .5 1 3-1.200 1.500q1.500 3 4 4L15.500 13l3 1.500q0 3-3 3.500Q8 17 6.200 9.500 6.500 6.500 8 6z" fill="#fff"/></svg><span class="cnt">3</span></div>
  <div class="app"><svg width="24" height="24"><use href="#firefox"/></svg></div>
  <div class="app"><svg width="24" height="24" viewBox="0 0 24 24"><path d="M7 1h15v14H7z" fill="#1374c9"/><path d="M14 1h8v7h-8z" fill="#4fc3f7"/><path d="M5 12h19v11H5z" fill="#1a8fe0"/><path d="M24 12L5 23h19z" fill="#4ab4f0"/><rect y="6" width="12" height="12" rx="1" fill="#0f64b8"/><text x="2" y="15.500" font-size="10" font-weight="700" fill="#fff">O</text></svg></div>
  <div class="app idle"><svg width="24" height="24" viewBox="0 0 24 24"><path d="M0 12C0 5 5 0 12 0s12 5 12 10c0 4-3 6.500-6.500 6.500-2.500 0-4-1-4-2 0-.8 1-1.500 1-3C14.500 9 12 7 9 7c-5 0-9 3-9 5z" fill="url(#ge)"/><path d="M0 12c0-3 4-6 9-5-4 3-4 9 0 13 4 3 10 2 13-2-2 4-6 6-10 6C5 24 0 19 0 12z" fill="#1583d6"/><path d="M9 8c-4 4-2 11 3 13 4 1.500 8 0 10.500-3-4 2-8 1.500-10.500-1S9 11 12 9q-1-1-3-1z" fill="#0b4f98"/></svg></div>
  <div class="app idle"><svg width="24" height="24"><use href="#spring"/></svg></div>
  <div class="app alert-on"><svg width="24" height="24"><use href="#docker"/></svg></div>
  <div class="app now"><svg width="24" height="24" viewBox="0 0 24 24"><circle cx="12" cy="12" r="11" fill="#2a2a2e" stroke="url(#gm)" stroke-width="1.800"/><path d="M9 6.500l8 5.500-8 5.500z" fill="#fff"/></svg></div>
  <div class="app"><svg width="23" height="24" viewBox="0 0 23 24"><path d="M.5 3h22v17H.5z" fill="#000" stroke="#8a8a8a"/><path d="M1 3.500h21v2H1z" fill="#ccc"/><text x="2.500" y="12" font-family="Liberation Mono" font-size="6.500" font-weight="700" fill="#fff">C:\_</text></svg></div>
  <div class="app"><svg width="24" height="24"><use href="#spring"/></svg></div>
  <div class="app"><svg width="22" height="24" viewBox="0 0 22 24"><path d="M0 1h22v22H0z" fill="url(#gi)"/><path d="M3 4h16v16H3z" fill="#100a20"/><text x="4.500" y="12" font-family="Liberation Mono" font-size="9" font-weight="700" fill="#fff">IJ</text><path d="M5 17.500h5" stroke="#fff" stroke-width="1.400"/></svg></div>
  <div class="app"><svg width="24" height="24" viewBox="0 0 24 24"><rect width="24" height="24" rx="9" fill="#0b5cff"/><text x="3.500" y="14" font-size="6.500" font-weight="600" letter-spacing="0" fill="#fff" textLength="17">zoom</text></svg></div>
  <div class="app"><svg width="24" height="24" viewBox="0 0 24 24"><path d="M12 1c7 0 11 4 11 9 0 6-4 12-10 12-3 0-2-4-5-5-4-1-7 0-7-4C1 6 6 1 12 1z" fill="#3fb2e6"/><circle cx="8" cy="6" r="2" fill="#3fa43a"/><circle cx="5" cy="12" r="2" fill="#d64a36"/><circle cx="12.500" cy="5" r="1.800" fill="#f2c029"/><circle cx="12" cy="13" r="1.500" fill="#1d3f56"/><path d="M16 8h5v7h-1v9h-3v-9h-1z" fill="#b87a3c"/><path d="M16 8h5v5h-5z" fill="#e8dccb"/></svg></div>
 </div>
 <div class="tr2 slots">
  <svg width="13" height="8"><use href="#up"/></svg>
  <svg width="17" height="11" viewBox="0 0 17 11"><path d="M4 11a4 4 0 0 1 0-7 6 6 0 0 1 10 0 3.500 3.500 0 0 1 0 7z" fill="#1d8ae2"/><path d="M4 4a6 6 0 0 1 9 0L5 8z" fill="#0f5cab"/></svg>
  <svg width="17" height="14" viewBox="0 0 17 14"><path d="M4 10a4 4 0 0 1 0-7 6 6 0 0 1 9 0 3.500 3.500 0 0 1 0 7z" fill="#c9c9c9"/><circle cx="11.500" cy="9" r="4.800" fill="#d9263a"/><path d="M9.700 7.200l3.600 3.600M13.300 7.200l-3.600 3.600" stroke="#fff" stroke-width="1.200"/></svg>
  <svg width="16" height="17" viewBox="0 0 16 17" fill="none" stroke="#fff" stroke-width="1.200"><path d="M1 6q2-5 7-5 4 0 7 4M15 1v4.500h-4.500M1 15.500V11h4.500M1.500 11.500q2 4 6 4"/><circle cx="12" cy="12.500" r="3.800" fill="#0c7cd5" stroke="none"/></svg>
  <svg width="15" height="16" color="#a6c9d8"><use href="#micr"/></svg>
  <span class="lang">ENG<br>IN</span><svg width="16" height="16"><use href="#wifi"/></svg>
  <svg width="16" height="16" viewBox="0 0 16 16"><use href="#vol" width="16" height="16"/><path d="M11 4q3 4 0 8M13.500 2.500q4 5.500 0 11" fill="none" stroke="#666"/></svg><svg width="16" height="15"><use href="#bat"/></svg>
  <span class="clock text-nowrap">12:07 PM<br>6/8/2023</span><svg width="15" height="15"><use href="#moon"/></svg>
 </div>
</div>
</body>
</html>
